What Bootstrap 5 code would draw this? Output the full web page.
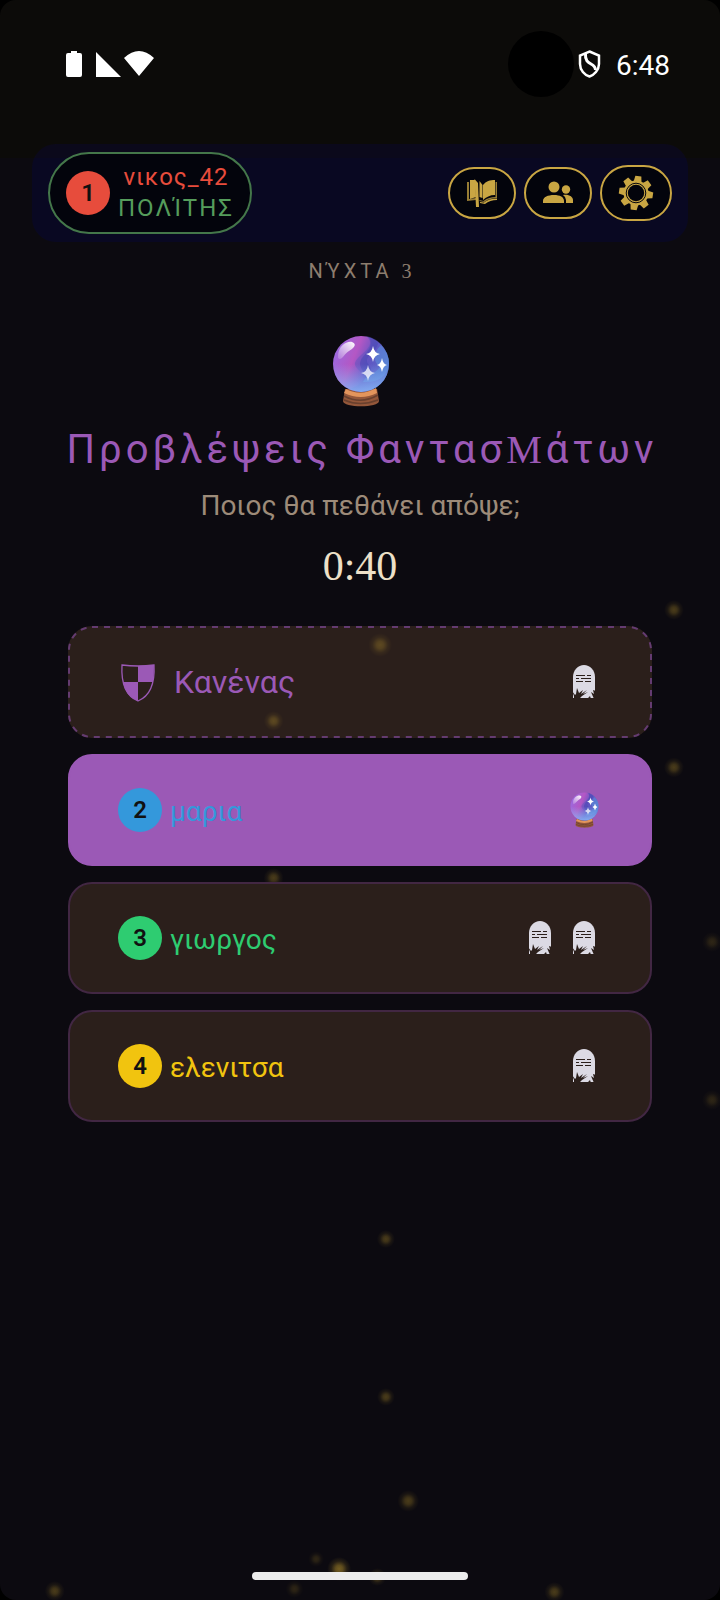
<!DOCTYPE html>
<html lang="el">
<head>
<meta charset="utf-8">
<meta name="viewport" content="width=device-width, initial-scale=1">
<title>Προβλέψεις Φαντασμάτων</title>
<link rel="stylesheet" href="https://cdn.jsdelivr.net/npm/bootstrap@5.3.0/dist/css/bootstrap.min.css">
<style>
  body { background: #000; font-family: Roboto, "Noto Sans", sans-serif; }
  button { font-family: inherit; }
  .screen { min-height: 100vh; border-radius: 16px; background: linear-gradient(#0c0b09 158px, #0c0a10 158px); }
  .serif { font-family: "Liberation Serif", serif; }
  .status { height: 144px; padding: 30px 50px 0 66px; color: #fff; }
  .status-row { height: 68px; }
  .camera { width: 66px; height: 66px; background: #000; margin-right: 4px; }
  .clock { font-size: 28px; line-height: 36px; margin-left: 15px; padding-top: 4px; }
  .topbar { margin: 0 32px; padding: 8px 16px; border-radius: 24px; background: linear-gradient(#0b091b 14px, #090822 14px); }
  .player { border: 2px solid #44774a; border-radius: 41px; background: #03040c; padding: 8px 16px; font-size: 24px; line-height: 31px; letter-spacing: 1px; }
  .role { color: #559c5b; letter-spacing: 2px; }
  .disc { width: 44px; height: 44px; font-size: 24px; font-weight: 600; letter-spacing: 0; color: #111; }
  .tool { border: 2px solid #c9a643; border-radius: 28px; background: #03040c; color: #c9a643; padding: 9px 17px; }
  .tool svg { width: 30px; height: 30px; }
  .tool.wide { padding: 8px 16px; }
  .tool.wide svg { width: 36px; height: 36px; }
  .night { font-size: 20px; line-height: 28px; letter-spacing: 4px; color: #8d7d6e; margin-top: 15px; padding-left: 4px; }
  .orb { width: 60px; height: 72px; margin-top: 50px; }
  .heading { font-size: 40px; line-height: 52px; letter-spacing: 4px; color: #9b59b6; font-weight: 400; margin-top: 17px; padding-left: 4px; }
  .heading .serif { font-size: 40px; line-height: 1; }
  .question { font-size: 28px; line-height: 36px; color: #9d8b79; margin-top: 12px; }
  .timer { font-size: 42px; line-height: 52px; color: #ede0c8; margin-top: 16px; }
  .choices { margin: 34px 68px 0; gap: 16px; }
  .choice { height: 112px; border: 2px solid #422743; border-radius: 24px; background: #2b1f1b; padding: 0 48px; font-size: 28px; }
  .choice.none { border-color: transparent; background-clip: border-box; color: #9b59b6; font-size: 32px; }
  .choice .dashes { inset: -2px; width: calc(100% + 4px); height: calc(100% + 4px); }
  .dashes rect { x: 1px; y: 1px; width: calc(100% - 2px); height: calc(100% - 2px); rx: 23px; fill: none; stroke: #643b70; stroke-width: 2px; stroke-dasharray: 6 6; }
  .choice.picked { background: #9b59b6; border-color: #9b59b6; }
  .choice svg { width: 36px; height: 36px; }
  .choice .crest { width: 40px; height: 40px; }
  .nick { padding-top: 4px; }
  .sparks { z-index: 0; pointer-events: none; }
  .above { z-index: 1; }
  .homebar { width: 30%; height: 8px; border-radius: 4px; background: #ececec; margin-bottom: 20px; }
  .red { background: #e74c3c; } .blue { background: #3498db; } .green { background: #2ecc71; } .gold { background: #f1c40f; }
  .t-red { color: #e74c3c; } .t-blue { color: #3498db; } .t-green { color: #2ecc71; } .t-gold { color: #f1c40f; }
</style>
</head>
<body>
<svg width="0" height="0" class="position-absolute" aria-hidden="true">
  <defs>
    <linearGradient id="ball" x1="0" y1=".3" x2="1" y2=".7"><stop offset="0" stop-color="#9a6be0"/><stop offset=".35" stop-color="#b457c4"/><stop offset=".6" stop-color="#6a55c4"/><stop offset="1" stop-color="#5f8fdc"/></linearGradient>
    <linearGradient id="rim" x1="0" y1="0" x2="0" y2="1"><stop offset=".5" stop-color="#8ab8f8" stop-opacity="0"/><stop offset="1" stop-color="#8ab8f8" stop-opacity=".85"/></linearGradient>
    <linearGradient id="shine" x1="1" y1="0" x2="0" y2="1"><stop offset="0" stop-color="#fff"/><stop offset="1" stop-color="#fff" stop-opacity=".15"/></linearGradient>
    <radialGradient id="spark"><stop offset="0" stop-color="#b8942c"/><stop offset=".3" stop-color="#b8942c" stop-opacity=".8"/><stop offset=".65" stop-color="#b8942c" stop-opacity=".25"/><stop offset="1" stop-color="#b8942c" stop-opacity="0"/></radialGradient>
    <symbol id="crystal" viewBox="1 0 60 72">
      <path d="M16 54h32l2 12c0 7-36 7-36 0z" fill="#94573a"/>
      <path d="M17 54q15 8 30-1l1 5q-16 8-33 0z" fill="#e3955c"/>
      <path d="M15 61q17 9 34-1M15 65q16 7 34 0" fill="none" stroke="#69402e" stroke-width="1.500"/>
      <circle cx="32" cy="29" r="28" fill="url(#ball)"/>
      <path d="M37 1c10 8 0 14-8 22-10 10 8 13 5 21-2 7-10 8-13 10 18 8 38-4 39-24C60 15 50 3 37 1z" fill="#4f52be" opacity=".4"/>
      <path d="M40 2c5 9-2 15-7 21-6 9 4 13 3 20 8-6 7-9 3-14-5-8 10-13 10-21-2-3-6-5-9-6z" fill="#4448b4" opacity=".5"/>
      <path d="M52 10c-9 9-8 16-1 22-6 8-14 8-17 15 14 1 25-5 26-19 0-7-3-13-8-18z" fill="#5b9be0" opacity=".45"/>
      <circle cx="32" cy="29" r="28" fill="url(#rim)"/>
      <path d="M9 20C10 11 17 6 23 7c6 2 1 7-3 9-5 3-8 11-11 7z" fill="url(#shine)"/>
      <g fill="#fff"><path d="M44 11q1 7 7 8-6 1-7 8-1-7-7-8 6-1 7-8z"/><path d="M53 23q1 6 5 7-4 1-5 7-1-6-5-7 4-1 5-7z"/><path opacity=".75" d="M39 30q1 7 7 8-6 1-7 8-1-7-7-8 6-1 7-8z"/></g>
    </symbol>
    <symbol id="tomb" viewBox="0 0 36 36">
      <path fill="#dcdae4" d="M7 34V13C7 6 12 1 18 1s11 5 11 12v21z"/>
      <path d="M10 11.500h9m2 0h4m-15 3h3m2 0h10m-15 3h7m2 0h6" stroke="#2b1f1b" stroke-width="1.200"/>
      <path d="M6 27l3 4 1-1 1-6 2 5 4-3-2 4 6-4-4 4 5-2-6 4-3 3H8l0-3zM25 35l-1-3-3 3zM30 27l-3-1 1 4-3-2 3 7h2z" fill="#2b1f1b"/>
    </symbol>
  </defs>
</svg>

<main class="screen position-relative overflow-hidden d-flex flex-column">
  <header class="status d-flex align-items-start">
    <div class="status-row d-flex align-items-center flex-grow-1">
      <svg width="88" height="28" viewBox="0 0 88 28" fill="#fff" role="img" aria-label="Μπαταρία, σήμα, Wi-Fi">
        <path d="M5 1h6v2h3a2 2 0 0 1 2 2v20a2 2 0 0 1-2 2H2a2 2 0 0 1-2-2V5a2 2 0 0 1 2-2h3zM30 2v25h25zM58 8q15-14 30 0L73 26z"/>
      </svg>
    </div>
    <div class="status-row d-flex align-items-center">
      <span class="camera rounded-circle"></span>
      <svg width="23" height="28" viewBox="0 0 22 28" fill="none" stroke="#fff" stroke-width="2.500" aria-hidden="true">
        <path d="M11 1.500l9.500 4V14c0 6-5 11-9.500 12.500C6 25 1.500 20 1.500 14V5.500z"/><path d="M7 4c-1 12 10 8 10 16" stroke-width="3"/>
      </svg>
      <span class="clock">6:48</span>
    </div>
  </header>

  <nav class="topbar d-flex align-items-center justify-content-between">
    <div class="player d-flex align-items-center gap-2">
      <span class="disc red rounded-circle d-flex align-items-center justify-content-center">1</span>
      <div class="text-center"><div class="t-red">νικος_42</div><div class="role">ΠΟΛΊΤΗΣ</div></div>
    </div>
    <div class="d-flex align-items-center gap-2">
      <button type="button" class="tool d-flex" aria-label="Βιβλίο">
        <svg viewBox="0 0 30 30" fill="currentColor"><path d="M3 2h5l1 17-6 2zM12.500 3l3 4v13l-3-1zM16 7c3-4 7-5 12-5v15c-5 0-9 2-12 5z"/><path d="M0 4h2v17l7-1v2l-9 1zM30 4h-1.500v15c-5 0-8 1-12 4l-4-1v1l5 1c4-3 8-4 12.500-4z" opacity=".75"/><path d="M7.500 1l3.500 4 1 24H9zM13 24l4 .5q5-4 13-4v1.500q-7 0-12 4l-5-1z"/></svg>
      </button>
      <button type="button" class="tool d-flex" aria-label="Παίκτες">
        <svg viewBox="0 0 30 30" fill="currentColor"><circle cx="11" cy="9" r="5.500"/><circle cx="23" cy="11.500" r="4.200"/><path d="M0 25v-2c0-4 5-6 11-6s10 2 10 6v2zM20 17c6-1 10 2 10 5v3h-7v-3q0-3-3-5z"/></svg>
      </button>
      <button type="button" class="tool wide d-flex" aria-label="Ρυθμίσεις">
        <svg viewBox="-18 -18 36 36" fill="currentColor">
          <g transform="rotate(8)"><path id="tooth" d="M-4-11l1-6h6l1 6v22l-1 6h-6l-1-6z"/><use href="#tooth" transform="rotate(45)"/><use href="#tooth" transform="rotate(90)"/><use href="#tooth" transform="rotate(135)"/></g>
          <circle r="12.500"/><circle r="9.800" fill="none" stroke="#03040c" stroke-width="1"/><circle r="8.200" fill="#03040c"/>
        </svg>
      </button>
    </div>
  </nav>

  <div class="night text-center">ΝΎΧΤΑ <span class="serif">3</span></div>
  <svg class="orb align-self-center" aria-hidden="true"><use href="#crystal"/></svg>
  <h1 class="heading text-center mb-0">Προβλέψεις Φαντασ<span class="serif">M</span>άτων</h1>
  <p class="question text-center mb-0">Ποιος θα πεθάνει απόψε;</p>
  <div class="timer serif text-center">0:40</div>

  <section class="choices d-flex flex-column">
    <button type="button" class="choice none position-relative d-flex align-items-center gap-3">
      <svg class="dashes position-absolute" aria-hidden="true"><rect/></svg>
      <svg class="crest" viewBox="0 0 40 40" aria-hidden="true"><path d="M4 3q16 2 32 0c1 18-4 31-16 36C8 34 3 21 4 3z" fill="none" stroke="currentColor" stroke-width="1.300"/><path d="M20 4q8 0 16-1 0 9-1 17H5q2 14 15 19z" fill="currentColor"/></svg>
      <span class="me-auto">Κανένας</span>
      <svg aria-hidden="true"><use href="#tomb"/></svg>
    </button>
    <button type="button" class="choice picked above position-relative d-flex align-items-center gap-2" aria-pressed="true">
      <span class="disc blue rounded-circle d-flex align-items-center justify-content-center">2</span>
      <span class="nick me-auto t-blue">μαρια</span>
      <svg aria-hidden="true"><use href="#crystal"/></svg>
    </button>
    <button type="button" class="choice above position-relative d-flex align-items-center gap-2">
      <span class="disc green rounded-circle d-flex align-items-center justify-content-center">3</span>
      <span class="nick me-auto t-green">γιωργος</span>
      <svg aria-hidden="true"><use href="#tomb"/></svg>
      <svg aria-hidden="true"><use href="#tomb"/></svg>
    </button>
    <button type="button" class="choice above position-relative d-flex align-items-center gap-2">
      <span class="disc gold rounded-circle d-flex align-items-center justify-content-center">4</span>
      <span class="nick me-auto t-gold">ελενιτσα</span>
      <svg aria-hidden="true"><use href="#tomb"/></svg>
    </button>
  </section>

  <div class="homebar above position-relative mt-auto mx-auto"></div>

  <svg class="sparks position-absolute top-0 start-0 w-100 h-100" fill="url(#spark)" aria-hidden="true">
    <g opacity=".36">
      <circle cx="93.600%" cy="38.120%" r="10"/><circle cx="52.800%" cy="40.310%" r="12"/><circle cx="38%" cy="45.060%" r="10"/>
      <circle cx="93.600%" cy="47.960%" r="10"/><circle cx="38%" cy="54.870%" r="10"/>
      <circle cx="53.600%" cy="77.440%" r="9"/><circle cx="53.600%" cy="87.310%" r="9"/><circle cx="56.700%" cy="93.810%" r="11"/>
      <circle cx="52.400%" cy="98.560%" r="9"/><circle cx="7.600%" cy="99.440%" r="10"/><circle cx="77%" cy="99.500%" r="10"/>
    </g>
    <g opacity=".2"><circle cx="98.900%" cy="58.870%" r="10"/><circle cx="98.900%" cy="68.750%" r="10"/><circle cx="43.900%" cy="97.440%" r="8"/><circle cx="40.900%" cy="99.310%" r="9"/></g>
    <circle cx="47.100%" cy="98.060%" r="12" opacity=".6"/>
  </svg>
</main>
<script src="https://cdn.jsdelivr.net/npm/bootstrap@5.3.0/dist/js/bootstrap.bundle.min.js"></script>
</body>
</html>
